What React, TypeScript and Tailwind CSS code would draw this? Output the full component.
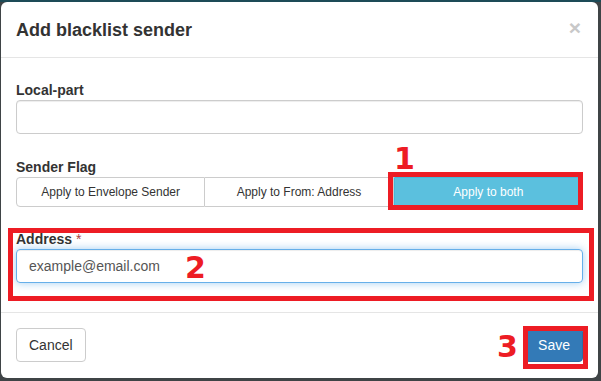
import React from "react";

const font = { fontFamily: '"Liberation Sans", Arial, sans-serif' };
const numFont = { fontFamily: '"DejaVu Sans", Verdana, sans-serif' };

export default function App() {
  return (
    <div className="w-[601px] h-[381px] bg-[#3f4446] overflow-hidden" style={font}>
      <div className="h-[2px] bg-[#1d4b57]" />
      <div className="relative ml-[1px] w-[597px] h-[376px] bg-white rounded-[6px] text-[#333]">
        {/* header */}
        <div className="h-[56px] pl-[15px] pr-[17px] flex items-center justify-between border-b border-[#e5e5e5]">
          <div className="text-[18px] font-bold leading-[26px] pt-[1px]">Add blacklist sender</div>
          <div className="text-[21px] font-bold leading-none text-[#c8c8c8] -mt-[4px]">×</div>
        </div>
        {/* body */}
        <div className="px-[15px] pt-[22px]">
          <div className="text-[14px] font-bold leading-[20px]">Local-part</div>
          <div className="h-[34px] border border-[#ccc] rounded-[4px] shadow-[inset_0_1px_1px_rgba(0,0,0,0.075)]" />
          <div className="mt-[23px] text-[14px] font-bold leading-[20px]">Sender Flag</div>
          <div className="flex h-[30px] text-[12px]">
            <div className="flex-1 flex items-center justify-center border border-[#ccc] rounded-l-[4px]">Apply to Envelope Sender</div>
            <div className="flex-1 flex items-center justify-center border-y border-r border-[#ccc]">Apply to From: Address</div>
            <div className="flex-1 flex items-center justify-center bg-[#5bc0de] border border-[#46b8da] rounded-r-[4px] text-white">Apply to both</div>
          </div>
          <div className="mt-[22px] text-[14px] font-bold leading-[20px]">
            Address <span className="text-[#a94442] font-normal">*</span>
          </div>
          <div className="h-[34px] border border-[#66afe9] rounded-[4px] shadow-[inset_0_1px_1px_rgba(0,0,0,0.075),0_0_8px_rgba(102,175,233,0.6)] flex items-center px-[12px] text-[14px] text-[#555]">
            example@email.com
          </div>
        </div>
        {/* footer */}
        <div className="mt-[29px] border-t border-[#e5e5e5] p-[15px] flex justify-between">
          <div className="h-[34px] px-[12px] flex items-center border border-[#ccc] rounded-[4px] text-[14px]">Cancel</div>
          <div className="h-[34px] px-[12px] flex items-center border border-[#2e6da4] bg-[#337ab7] rounded-[4px] text-[14px] text-white">Save</div>
        </div>

        {/* annotations */}
        <div className="absolute left-[387px] top-[170px] w-[195px] h-[38px] border-[5px] border-[#ed1c24]" />
        <div className="absolute left-[7px] top-[226px] w-[586px] h-[73px] border-[5px] border-[#ed1c24]" />
        <div className="absolute left-[522px] top-[324px] w-[65px] h-[43px] border-[5px] border-[#ed1c24]" />
        <div className="absolute left-[393px] top-[142px] text-[30px] leading-[30px] font-bold text-[#ed1c24]" style={numFont}>1</div>
        <div className="absolute left-[184px] top-[251px] text-[30px] leading-[30px] font-bold text-[#ed1c24]" style={numFont}>2</div>
        <div className="absolute left-[496px] top-[330px] text-[30px] leading-[30px] font-bold text-[#ed1c24]" style={numFont}>3</div>
      </div>
    </div>
  );
}
